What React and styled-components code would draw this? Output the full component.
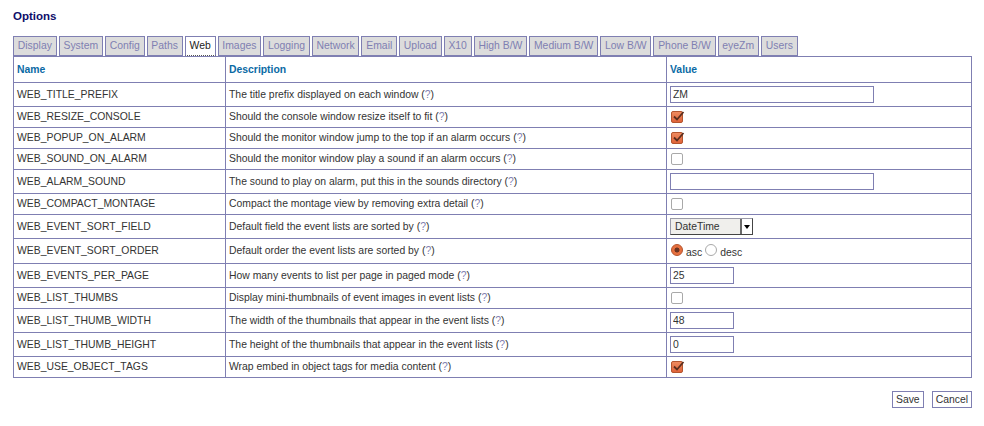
import React from "react";
import styled, { createGlobalStyle, css } from "styled-components";

const GlobalStyle = createGlobalStyle`
  html, body { margin: 0; padding: 0; background: #ffffff; }
  body {
    font-family: "Liberation Sans", Arial, sans-serif;
    font-size: 10.4px;
    color: #333333;
  }
  * { box-sizing: border-box; }
`;

const LINE = "#7f7fb2";

const Page = styled.div`
  padding: 9px 12px 0 13px;
`;

const Title = styled.h2`
  margin: 0;
  font-size: 11.5px;
  line-height: 14px;
  font-weight: bold;
  color: #0e0e6a;
`;

const TabList = styled.ul`
  list-style: none;
  margin: 13px 0 0 0;
  padding: 0;
  display: flex;
  gap: 2px;
`;

const Tab = styled.li`
  height: 20px;
  padding: 3px 3.8px;
  line-height: 12px;
  border: 1px solid ${LINE};
  background: #dcdcdc;
  color: ${LINE};
  white-space: nowrap;
  ${(p) =>
    p.$active &&
    css`
      background: #ffffff;
      color: #222222;
      border-bottom: 1px dotted #555555;
    `}
`;

const Table = styled.table`
  width: 100%;
  border-collapse: collapse;
  table-layout: fixed;
  border: 1px solid ${LINE};
`;

const Th = styled.th`
  text-align: left;
  font-weight: bold;
  color: #0b6aa5;
  padding: 6px 3px 5px;
  line-height: 14px;
  border: 1px solid ${LINE};
`;

const Td = styled.td`
  padding: 3px;
  line-height: 14px;
  vertical-align: middle;
  border: 1px solid ${LINE};
  white-space: nowrap;
`;

const Help = styled.a`
  color: ${LINE};
  text-decoration: none;
`;

const TextInput = styled.input`
  display: block;
  width: ${(p) => p.$w}px;
  height: 17px;
  margin: 0;
  padding: 0 2px;
  border: 1px solid ${LINE};
  font-family: inherit;
  font-size: 10.4px;
  color: #333333;
  background: #ffffff;
  outline: none;
`;

const CheckBox = styled.span`
  display: block;
  position: relative;
  width: 12px;
  height: 12px;
  margin: 1px 0 1px 1px;
  border-radius: 2px;
  border: 1px solid ${(p) => (p.$on ? "#b4552f" : "#a9a9a9")};
  background: ${(p) =>
    p.$on ? "linear-gradient(#ee8a5f, #e0643a)" : "#ffffff"};
`;

const Tick = styled.svg`
  position: absolute;
  left: 0px;
  top: -2px;
  width: 13px;
  height: 12px;
`;

const Check = ({ on }) => (
  <CheckBox $on={on}>
    {on && (
      <Tick viewBox="0 0 13 12">
        <path
          d="M2 6.5 L5 9.5 L11.5 2"
          fill="none"
          stroke="#5a2e1f"
          strokeWidth="1.8"
        />
      </Tick>
    )}
  </CheckBox>
);

const SelectBox = styled.div`
  display: flex;
  width: 83px;
  height: 17px;
  border: 1px solid #9a9aa8;
  border-right-color: #444444;
  border-bottom-color: #444444;
  background: #f0efec;
  color: #333333;
`;

const SelectText = styled.span`
  flex: 1;
  padding-left: 4px;
  line-height: 15px;
`;

const SelectArrow = styled.span`
  width: 12px;
  display: flex;
  align-items: center;
  justify-content: center;
  background: #ffffff;
  border-left: 2px solid #6a6a6a;
  &::after {
    content: "";
    border-left: 3.5px solid transparent;
    border-right: 3.5px solid transparent;
    border-top: 4px solid #000000;
  }
`;

const RadioGroup = styled.div`
  display: flex;
  height: 18px;
  align-items: flex-start;
`;

const RadioDot = styled.span`
  width: 12px;
  height: 12px;
  margin: 2px 3px 0 1px;
  border-radius: 50%;
  border: 1px solid ${(p) => (p.$on ? "#b4552f" : "#a9a9a9")};
  background: ${(p) =>
    p.$on
      ? "radial-gradient(circle, #6a3322 0 2.2px, #e6703f 2.8px)"
      : "#ffffff"};
`;

const RadioLabel = styled.span`
  padding-top: 4px;
  line-height: 14px;
  margin-right: 2px;
`;

const Actions = styled.div`
  display: flex;
  justify-content: flex-end;
  gap: 8px;
  margin-top: 13px;
`;

const Button = styled.button`
  height: 17px;
  padding: 0 3px;
  margin: 0;
  border: 1px solid ${LINE};
  background: #ffffff;
  color: #333333;
  font-family: inherit;
  font-size: 10.4px;
  line-height: 15px;
`;

const tabs = [
  "Display", "System", "Config", "Paths", "Web", "Images", "Logging",
  "Network", "Email", "Upload", "X10", "High B/W", "Medium B/W",
  "Low B/W", "Phone B/W", "eyeZm", "Users",
];

const rows = [
  ["WEB_TITLE_PREFIX", "The title prefix displayed on each window", { t: "text", v: "ZM", w: 204 }],
  ["WEB_RESIZE_CONSOLE", "Should the console window resize itself to fit", { t: "check", v: true }],
  ["WEB_POPUP_ON_ALARM", "Should the monitor window jump to the top if an alarm occurs", { t: "check", v: true }],
  ["WEB_SOUND_ON_ALARM", "Should the monitor window play a sound if an alarm occurs", { t: "check", v: false }],
  ["WEB_ALARM_SOUND", "The sound to play on alarm, put this in the sounds directory", { t: "text", v: "", w: 204 }],
  ["WEB_COMPACT_MONTAGE", "Compact the montage view by removing extra detail", { t: "check", v: false }],
  ["WEB_EVENT_SORT_FIELD", "Default field the event lists are sorted by", { t: "select", v: "DateTime" }],
  ["WEB_EVENT_SORT_ORDER", "Default order the event lists are sorted by", { t: "radio" }],
  ["WEB_EVENTS_PER_PAGE", "How many events to list per page in paged mode", { t: "text", v: "25", w: 64 }],
  ["WEB_LIST_THUMBS", "Display mini-thumbnails of event images in event lists", { t: "check", v: false }],
  ["WEB_LIST_THUMB_WIDTH", "The width of the thumbnails that appear in the event lists", { t: "text", v: "48", w: 64 }],
  ["WEB_LIST_THUMB_HEIGHT", "The height of the thumbnails that appear in the event lists", { t: "text", v: "0", w: 64 }],
  ["WEB_USE_OBJECT_TAGS", "Wrap embed in object tags for media content", { t: "check", v: true }],
];

const Value = ({ spec }) => {
  switch (spec.t) {
    case "text":
      return <TextInput $w={spec.w} defaultValue={spec.v} />;
    case "check":
      return <Check on={spec.v} />;
    case "select":
      return (
        <SelectBox>
          <SelectText>{spec.v}</SelectText>
          <SelectArrow />
        </SelectBox>
      );
    case "radio":
      return (
        <RadioGroup>
          <RadioDot $on />
          <RadioLabel>asc</RadioLabel>
          <RadioDot />
          <RadioLabel>desc</RadioLabel>
        </RadioGroup>
      );
    default:
      return null;
  }
};

export default function App() {
  return (
    <>
      <GlobalStyle />
      <Page>
        <Title>Options</Title>
        <TabList>
          {tabs.map((t) => (
            <Tab key={t} $active={t === "Web"}>
              {t}
            </Tab>
          ))}
        </TabList>
        <Table>
          <colgroup>
            <col style={{ width: 212 }} />
            <col style={{ width: 441 }} />
            <col />
          </colgroup>
          <thead>
            <tr>
              <Th>Name</Th>
              <Th>Description</Th>
              <Th>Value</Th>
            </tr>
          </thead>
          <tbody>
            {rows.map(([name, desc, spec]) => (
              <tr key={name}>
                <Td>{name}</Td>
                <Td>
                  {desc} (<Help href="#">?</Help>)
                </Td>
                <Td>
                  <Value spec={spec} />
                </Td>
              </tr>
            ))}
          </tbody>
        </Table>
        <Actions>
          <Button>Save</Button>
          <Button>Cancel</Button>
        </Actions>
      </Page>
    </>
  );
}
